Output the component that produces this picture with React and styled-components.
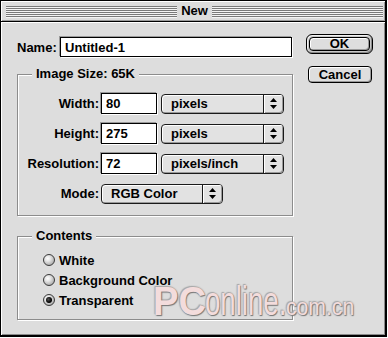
import React from "react";
import styled, { createGlobalStyle } from "styled-components";

const Global = createGlobalStyle`
  html, body { margin: 0; padding: 0; background: #ffffff; }
  body { font-family: "Liberation Sans", Arial, sans-serif; }
`;

const Window = styled.div`
  position: relative;
  width: 387px;
  height: 337px;
  box-sizing: border-box;
  border: 1px solid #000;
  border-right-width: 2px;
  border-bottom-width: 2px;
  background: #dddddd;
  display: flex;
  flex-direction: column;
  font-family: "Liberation Sans", Arial, sans-serif;
  font-weight: bold;
  font-size: 13px;
  color: #000;
  overflow: hidden;
`;

const TitleBar = styled.div`
  flex: none;
  height: 20px;
  display: flex;
  align-items: center;
  padding: 0 2px 0 5px;
  border-bottom: 1px solid #000;
  box-shadow: inset 1px 1px 0 #fff, inset -1px -1px 0 #9a9a9a;
`;

const Stripes = styled.div`
  flex: 1;
  height: 12px;
  margin-top: 1px;
  background: repeating-linear-gradient(
    to bottom,
    #7a7a7a 0 1px,
    #f4f4f4 1px 2px
  );
`;

const Title = styled.span`
  padding: 0 4px;
  line-height: 16px;
`;

const Body = styled.div`
  flex: 1;
  display: flex;
  gap: 13px;
  padding: 12px 0 0 16px;
  box-shadow: inset 1px 1px 0 #fff, inset -1px -1px 0 #8a8a8a;
`;

const Column = styled.div`
  width: 276px;
  display: flex;
  flex-direction: column;
  padding-top: 3px;
`;

const Row = styled.div`
  display: flex;
  align-items: center;
  height: ${(p) => p.$h || 21}px;
`;

const Label = styled.span`
  width: ${(p) => p.$w}px;
  text-align: ${(p) => p.$align || "right"};
  flex: none;
`;

const Field = styled.div`
  box-sizing: border-box;
  width: ${(p) => p.$w}px;
  height: ${(p) => p.$h || 21}px;
  margin-left: ${(p) => p.$ml || 0}px;
  padding-left: 4px;
  background: #fff;
  border: 1px solid #000;
  box-shadow: -1px -1px 0 #9a9a9a, 1px 1px 0 #fff;
  display: flex;
  align-items: center;
`;

const GroupBox = styled.div`
  box-sizing: border-box;
  height: ${(p) => p.$h}px;
  margin-top: ${(p) => p.$mt}px;
  border: 1px solid #8c8c8c;
  box-shadow: inset 1px 1px 0 #fff, 1px 1px 0 #fff;
  display: flex;
  flex-direction: column;
`;

const Legend = styled.div`
  align-self: flex-start;
  margin: -9px 0 0 14px;
  padding: 0 4px;
  height: 16px;
  line-height: 16px;
  background: #dddddd;
`;

const Rows = styled.div`
  display: flex;
  flex-direction: column;
  gap: ${(p) => p.$gap}px;
  margin-top: ${(p) => p.$mt}px;
  padding-left: ${(p) => p.$pl || 0}px;
`;

const Popup = styled.div`
  box-sizing: border-box;
  width: ${(p) => p.$w}px;
  height: 20px;
  margin-left: ${(p) => p.$ml}px;
  border: 1px solid #1a1a1a;
  border-radius: 4px;
  background: #e2e2e2;
  box-shadow: inset 1px 1px 0 #fff, inset -1px -1px 0 #9a9a9a;
  display: flex;
  overflow: hidden;
`;

const PopupText = styled.span`
  flex: 1;
  padding-left: 9px;
  line-height: 18px;
`;

const PopupArrows = styled.span`
  width: 19px;
  border-left: 1px solid #1a1a1a;
  display: flex;
  align-items: center;
  justify-content: center;
  box-shadow: inset 1px 1px 0 #fff, inset -1px -1px 0 #9a9a9a;
`;

const Buttons = styled.div`
  display: flex;
  flex-direction: column;
  align-items: flex-start;
`;

const DefaultRing = styled.div`
  box-sizing: border-box;
  width: 67px;
  height: 20px;
  padding: 2px;
  border: 1px solid #000;
  border-radius: 6px;
  background: #c8c8c8;
  box-shadow: inset 1px 1px 0 #f2f2f2, inset -1px -1px 0 #8a8a8a;
  display: flex;
`;

const Button = styled.div`
  box-sizing: border-box;
  flex: ${(p) => (p.$fill ? 1 : "none")};
  width: ${(p) => (p.$fill ? "auto" : `${p.$w}px`)};
  height: ${(p) => (p.$fill ? "auto" : `${p.$h}px`)};
  margin: ${(p) => p.$m || "0"};
  border: 1px solid #000;
  border-radius: 4px;
  background: #dedede;
  box-shadow: inset 1px 1px 0 #fff, inset -1px -1px 0 #999;
  display: flex;
  align-items: center;
  justify-content: center;
  line-height: 12px;
`;

const Radio = styled.span`
  position: relative;
  box-sizing: border-box;
  width: 12px;
  height: 12px;
  border-radius: 50%;
  border: 1px solid #3a3a3a;
  background: radial-gradient(circle at 38% 35%, #ffffff 0, #e6e6e6 30%, #a9a9a9 80%, #8a8a8a 100%);
  flex: none;
  margin-right: 4px;

  &::after {
    content: "";
    display: ${(p) => (p.$on ? "block" : "none")};
    position: absolute;
    left: 2px;
    top: 2px;
    width: 6px;
    height: 6px;
    border-radius: 50%;
    background: radial-gradient(circle at 40% 40%, #555 0, #000 60%);
  }
`;

const Watermark = styled.div`
  position: absolute;
  left: 152px;
  top: 280px;
  display: flex;
  align-items: baseline;
  color: #f3dcdc;
  text-shadow: 1px 1px 1px #777, -1px -1px 1px #a8a8a8, 0 0 2px #8a8a8a;
  pointer-events: none;
`;

const Mark = styled.span`
  display: inline-block;
  width: ${(p) => p.$w}px;
  font-size: ${(p) => p.$size}px;
  font-weight: ${(p) => p.$weight};
  line-height: 1;
  white-space: nowrap;
  transform: scaleX(${(p) => p.$sx});
  transform-origin: left;
`;

const Arrows = () => (
  <svg width="7" height="11" viewBox="0 0 7 11">
    <polygon points="3.5,0 7,4 0,4" fill="#000" />
    <polygon points="0,7 7,7 3.5,11" fill="#000" />
  </svg>
);

const Select = ({ w, ml, children }) => (
  <Popup $w={w} $ml={ml}>
    <PopupText>{children}</PopupText>
    <PopupArrows>
      <Arrows />
    </PopupArrows>
  </Popup>
);

const sizes = [
  { label: "Width:", value: "80", unit: "pixels" },
  { label: "Height:", value: "275", unit: "pixels" },
  { label: "Resolution:", value: "72", unit: "pixels/inch" },
];

const contents = [
  { label: "White", on: false },
  { label: "Background Color", on: false },
  { label: "Transparent", on: true },
];

export default function App() {
  return (
    <>
      <Global />
      <Window>
        <TitleBar>
          <Stripes />
          <Title>New</Title>
          <Stripes />
        </TitleBar>
        <Body>
          <Column>
            <Row $h={20}>
              <Label $w={43} $align="left">Name:</Label>
              <Field $w={232} $h={20}>Untitled-1</Field>
            </Row>

            <GroupBox $h={142} $mt={17}>
              <Legend>Image Size: 65K</Legend>
              <Rows $gap={9} $mt={11}>
                {sizes.map((s) => (
                  <Row key={s.label}>
                    <Label $w={81}>{s.label}</Label>
                    <Field $w={56} $ml={2}>{s.value}</Field>
                    <Select w={123} ml={4}>{s.unit}</Select>
                  </Row>
                ))}
                <Row>
                  <Label $w={81}>Mode:</Label>
                  <Select w={122} ml={2}>RGB Color</Select>
                </Row>
              </Rows>
            </GroupBox>

            <GroupBox $h={84} $mt={20}>
              <Legend>Contents</Legend>
              <Rows $gap={0} $mt={6} $pl={25}>
                {contents.map((c) => (
                  <Row key={c.label} $h={20}>
                    <Radio $on={c.on} />
                    <span>{c.label}</span>
                  </Row>
                ))}
              </Rows>
            </GroupBox>
          </Column>

          <Buttons>
            <DefaultRing>
              <Button $fill>OK</Button>
            </DefaultRing>
            <Button $w={64} $h={17} $m="12px 0 0 2px">Cancel</Button>
          </Buttons>
        </Body>

        <Watermark>
          <Mark $w={52} $size={41} $weight={700} $sx={0.93}>PC</Mark>
          <Mark $w={81} $size={40} $weight={400} $sx={0.69}>online.</Mark>
          <Mark $w={76} $size={23} $weight={400} $sx={0.92}>com.cn</Mark>
        </Watermark>
      </Window>
    </>
  );
}
